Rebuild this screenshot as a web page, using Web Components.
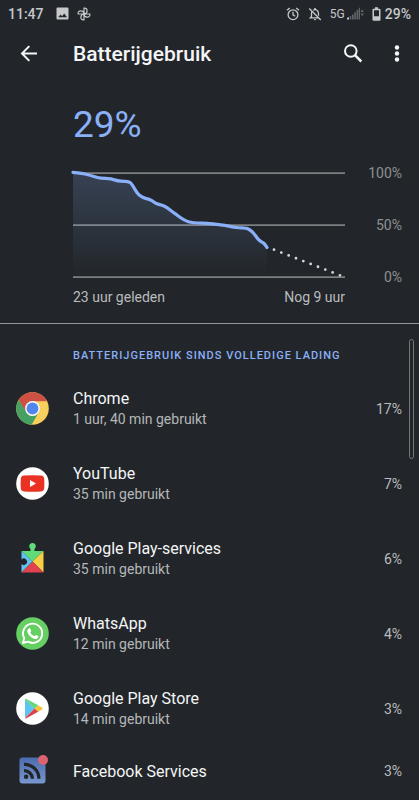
<!DOCTYPE html>
<html lang="nl">
<head>
<meta charset="UTF-8">
<meta name="viewport" content="width=device-width, initial-scale=1.0">
<title>Batterijgebruik</title>
<style>
    :root {
        --bg: #22262a;
        --accent: #8ab0f8;
        --text: #f4f5f6;
        --text-dim: #b4b7b9;
        --line: #7c8082;
    }
    body {
        margin: 0;
        background: var(--bg);
        color: var(--text);
        font-family: Roboto, "Liberation Sans", sans-serif;
    }
</style>
</head>
<body>
<battery-page></battery-page>

<script>
class StatusBar extends HTMLElement {
    constructor() {
        super();
        this.attachShadow({ mode: 'open' });
    }

    connectedCallback() {
        this.shadowRoot.innerHTML = `
            <style>
                :host {
                    display: flex;
                    align-items: center;
                    height: 27px;
                    padding: 0 8px;
                    color: #c6c8ca;
                    font-size: 14px;
                    font-weight: 500;
                }
                svg { display: block; fill: currentColor; }
                .left, .right { display: flex; align-items: center; }
                .left { gap: 8px; }
                .left time { margin-right: 4px; }
                .right { margin-left: auto; gap: 8px; }
                .signal, .battery { display: flex; align-items: center; gap: 2px; }
                .signal span { font-size: 12px; font-weight: 400; }
                .battery { gap: 4px; }
            </style>
            <div class="left">
                <time>${this.getAttribute('time')}</time>
                <svg width="13" height="13" viewBox="0 0 13 13"><path fill-rule="evenodd" d="M1.6 .5h9.8q1.1 0 1.1 1.1v9.8q0 1.1-1.1 1.1H1.6q-1.1 0-1.1-1.1V1.6Q.5.5 1.6.5zM2.2 10.3h8.8L8.2 6.4 6.1 9.2 4.6 7.4z"/></svg>
                <svg width="14" height="14" viewBox="0 0 14 14"><g fill="none" stroke="currentColor" stroke-width="1.2"><path d="M7 7V1.2C9.1.7 10.3 2.2 10.1 3.9 10 5.6 8.7 7 7 7z"/><path d="M7 7h5.8c.5 2.1-1 3.3-2.7 3.1C8.4 10 7 8.7 7 7z"/><path d="M7 7v5.8c-2.1.5-3.3-1-3.1-2.7C4 8.4 5.3 7 7 7z"/><path d="M7 7H1.2C.7 4.9 2.2 3.7 3.9 3.900 5.600 4 7 5.300 7 7z"/></g></svg>
            </div>
            <div class="right">
                <svg width="14" height="14" viewBox="0 0 14 14"><g fill="none" stroke="currentColor" stroke-width="1.3"><circle cx="7" cy="7.7" r="4.9"/><path d="M7 4.7v3.2l2.2 1.3M1 3.3 3.8 1M13 3.3 10.2 1"/></g></svg>
                <svg width="14" height="14" viewBox="0 0 14 14"><g fill="none" stroke="currentColor" stroke-width="1.3"><path d="M3.7 4.8C3.4 6 3.5 8 3.5 9.5L2.3 10.9h8.5M5.2 3.2C8 1.6 10.5 3.7 10.5 6.5v2.2M1.3 1.5l11.5 11.5"/></g><path d="M6.2 1h1.6v2H6.2zM5.6 12h2.8L7 13.6z"/></svg>
                <div class="signal">
                    <span>5G</span>
                    <svg width="17" height="13" viewBox="0 0 17 13"><path d="M0 12.5v-1.5L2 10v2.500z"/><path fill="#63676a" d="M2.7 9.3h1.6v3.2H2.7zM5 7.5h1.6v5H5zM7.3 5.3h1.6v7.2H7.3zM9.6 3h1.6v9.5H9.6zM11.8.7h1.2v11.8h-1.2zM13.6 5 15.2 2.3 16.8 5zM13.6 6.5h3.2L15.2 9.2z"/></svg>
                </div>
                <div class="battery">
                    <svg width="9" height="14" viewBox="0 0 9 14"><path fill-rule="evenodd" d="M3 .3h3v1.5h1.5q1 0 1 1v9.9q0 1-1 1h-6q-1 0-1-1V2.8q0-1 1-1H3zM2 3.2v6h5v-6z"/></svg>
                    <span>29%</span>
                </div>
            </div>
        `;
    }
}

class AppBar extends HTMLElement {
    constructor() {
        super();
        this.attachShadow({ mode: 'open' });
    }

    connectedCallback() {
        this.shadowRoot.innerHTML = `
            <style>
                :host {
                    display: grid;
                    grid-template-columns: 57px 1fr 44px 44px;
                    align-items: center;
                    height: 53px;
                }
                h1 {
                    margin: 0;
                    padding-left: 16px;
                    font-size: 21px;
                    font-weight: 500;
                    line-height: 24px;
                }
                button {
                    display: grid;
                    place-items: center;
                    height: 44px;
                    padding: 0;
                    border: 0;
                    background: none;
                    color: inherit;
                }
                svg { display: block; fill: none; stroke: currentColor; stroke-width: 2; }
                .dots { fill: currentColor; stroke: none; }
            </style>
            <button aria-label="Terug"><svg width="18" height="18" viewBox="0 0 18 18"><path d="M17 8.5H2.5M9.3 1.1 2 8.5l7.3 7.4"/></svg></button>
            <h1><slot></slot></h1>
            <button aria-label="Zoeken"><svg width="20" height="20" viewBox="0 0 20 20"><circle cx="7.8" cy="7" r="5.8"/><path stroke-width="2.5" d="m12 11.2 6.300 6.300"/></svg></button>
            <button aria-label="Meer opties"><svg class="dots" width="6" height="18" viewBox="0 0 6 18"><circle cx="3" cy="2.500" r="2.200"/><circle cx="3" cy="8.500" r="2.200"/><circle cx="3" cy="14.500" r="2.200"/></svg></button>
        `;
    }
}

class BatteryChart extends HTMLElement {
    constructor() {
        super();
        this.attachShadow({ mode: 'open' });
    }

    connectedCallback() {
        const line = 'M0 7.4C6 8 10 8.5 15 9.7S23 12.8 28 13.2S34 13 38 13.9S43 15.8 48 16.2S54 16 56.5 17.2C60 19 62 26.5 66.5 30.2S73 33 77 34.7S80 37 84 38.7S88 39.3 92 41.5S98 46 102 48.7S110 55 115.5 56.8S128 58 134 58.3S144 59.3 150 60.2S158 61.7 163.5 62.5S169 62.5 172.5 63.2C180 64.5 182 71 185.5 74.5C188 77 189.5 77 191 78.5C192.5 80 193 81 194 82.5';
        this.shadowRoot.innerHTML = `
            <style>
                :host {
                    display: block;
                    padding: 23px 17px 16px 73px;
                }
                .level {
                    color: var(--accent);
                    font-size: 37px;
                    line-height: 44px;
                }
                .plot {
                    display: grid;
                    grid-template-columns: 1fr 57px;
                    margin-top: 18px;
                }
                svg { display: block; width: 100%; height: 120px; overflow: visible; }
                svg path { fill: none; vector-effect: non-scaling-stroke; }
                .grid { stroke: var(--line); stroke-width: 1.7; }
                .used { stroke: var(--accent); stroke-width: 3.2; stroke-linecap: round; stroke-linejoin: round; }
                .left { stroke: #d4d6d8; stroke-width: 2.8; stroke-linecap: round; stroke-dasharray: 0 7.86; }
                svg .area { fill: url(#fade); }
                .scale {
                    display: flex;
                    flex-direction: column;
                    justify-content: space-between;
                    text-align: right;
                    color: #8d9092;
                    font-size: 14px;
                    line-height: 16px;
                }
                .span {
                    grid-column: 1;
                    display: flex;
                    justify-content: space-between;
                    margin-top: 3px;
                    color: #b9bcbe;
                    font-size: 14px;
                    line-height: 19px;
                }
            </style>
            <div class="level">29%</div>
            <div class="plot">
                <svg viewBox="0 0 272 120" preserveAspectRatio="none">
                    <linearGradient id="fade" x1="0" y1="0" x2="0" y2="1">
                        <stop offset="0" stop-color="#8ab0f8" stop-opacity=".2"/>
                        <stop offset="1" stop-color="#8ab0f8" stop-opacity="0"/>
                    </linearGradient>
                    <path class="grid" d="M0 8.2H272M0 60.2H272M0 112.2H272"/>
                    <path class="area" d="${line}V112H0z"/>
                    <path class="used" d="${line}"/>
                    <path class="left" d="M201 84.7 267.5 110.5"/>
                </svg>
                <div class="scale"><span>100%</span><span>50%</span><span>0%</span></div>
                <div class="span"><span>23 uur geleden</span><span>Nog 9 uur</span></div>
            </div>
        `;
    }
}

class UsageRow extends HTMLElement {
    constructor() {
        super();
        this.attachShadow({ mode: 'open' });
    }

    connectedCallback() {
        const detail = this.getAttribute('detail');
        this.shadowRoot.innerHTML = `
            <style>
                :host {
                    display: grid;
                    grid-template-columns: 33px 1fr auto;
                    column-gap: 24px;
                    align-items: center;
                    height: 75px;
                    padding: 0 17px 0 16px;
                }
                :host(.single) { height: 50px; }
                ::slotted(svg) { display: block; }
                .name { font-size: 16px; line-height: 21px; }
                .detail { color: var(--text-dim); font-size: 14px; line-height: 20px; }
                .share { color: #b9bcbe; font-size: 14px; }
            </style>
            <slot name="icon"></slot>
            <div>
                <div class="name"><slot></slot></div>
                ${detail ? `<div class="detail">${detail}</div>` : ''}
            </div>
            <div class="share">${this.getAttribute('share')}</div>
        `;
    }
}

class BatteryPage extends HTMLElement {
    constructor() {
        super();
        this.attachShadow({ mode: 'open' });
    }

    connectedCallback() {
        this.shadowRoot.innerHTML = `
            <style>
                :host {
                    display: flex;
                    flex-direction: column;
                    height: 100vh;
                    overflow: hidden;
                }
                .list {
                    position: relative;
                    flex: 1;
                    min-height: 0;
                    overflow: hidden;
                    border-top: 1px solid #92979a;
                }
                h2 {
                    margin: 0;
                    padding: 24px 16px 7px 73px;
                    color: var(--accent);
                    font-size: 11px;
                    font-weight: 500;
                    line-height: 16px;
                    letter-spacing: 1px;
                    text-transform: uppercase;
                }
                /* scroll thumb, floats over the rows */
                .thumb {
                    position: absolute;
                    top: 15px;
                    right: 5px;
                    width: 3px;
                    height: 118px;
                    border: 1px solid #74787a;
                    border-radius: 3px;
                }
            </style>
            <status-bar time="11:47"></status-bar>
            <app-bar>Batterijgebruik</app-bar>
            <battery-chart></battery-chart>
            <section class="list">
                <h2>Batterijgebruik sinds volledige lading</h2>
                <usage-row detail="1 uur, 40 min gebruikt" share="17%">
                    <svg slot="icon" width="33" height="33" viewBox="0 0 33 33">
                        <circle cx="16.5" cy="16.5" r="16.3" fill="#f6cf5c"/>
                        <path fill="#cc5144" d="M2.6 8A16.3 16.3 0 0 1 31 9.2H16.5L9.7 20.5z"/>
                        <path fill="#45a063" d="M2.6 8 10.2 20.3a7.3 7.3 0 0 0 12.6 0L15.6 32.8A16.3 16.3 0 0 1 2.6 8z"/>
                        <circle cx="16.5" cy="16.5" r="7.4" fill="#fafafa"/>
                        <circle cx="16.5" cy="16.5" r="5.9" fill="#5186ec"/>
                    </svg>
                    Chrome
                </usage-row>
                <usage-row detail="35 min gebruikt" share="7%">
                    <svg slot="icon" width="33" height="33" viewBox="0 0 33 33">
                        <circle cx="16.5" cy="16.5" r="16.3" fill="#fff"/>
                        <path fill="#e93223" d="M8 8.6Q16.5 8 25 8.6 28 8.8 28.2 12 28.6 16.5 28.2 21 28 24.2 25 24.4 16.5 25 8 24.4 5 24.2 4.8 21 4.4 16.5 4.8 12 5 8.8 8 8.6z"/>
                        <path fill="#fff" d="m14 13 6 3.5-6 3.5z"/>
                    </svg>
                    YouTube
                </usage-row>
                <usage-row detail="35 min gebruikt" share="6%">
                    <svg slot="icon" width="33" height="33" viewBox="0 0 33 33">
                        <path fill="#5fdb78" d="M5.5 9h9V6.9a3.300 3.300 0 1 1 4 0V9h9L16.5 19.500z"/>
                        <path fill="#5fc3f2" d="M5.500 9 16.500 19.500 5.500 30.500V22a3.200 3.200 0 1 0 0-4.500z"/>
                        <path fill="#f7ce46" d="M27.500 9v21.500l-11-11z"/>
                        <path fill="#e0434c" d="m5.500 30.500 11-11 11 11z"/>
                    </svg>
                    Google Play-services
                </usage-row>
                <usage-row detail="12 min gebruikt" share="4%">
                    <svg slot="icon" width="33" height="33" viewBox="0 0 33 33">
                        <circle cx="16.5" cy="16.5" r="16.3" fill="#65cf63"/>
                        <path fill="none" stroke="#fff" stroke-width="1.9" stroke-linejoin="round" d="m6.9 26 1.4-4.9a9.6 9.6 0 1 1 3.7 3.6z"/>
                        <path fill="#fff" d="M13 11.3c.6-.3 1.2-.1 1.4.5l.8 2c.2.5-.7 1.300-.9 1.700.9 1.800 2.300 3 4.100 3.700.5-.4 1-1.400 1.600-1.300l2.200 1.100c.5.300.1 1.600-.4 2.100-1.600 1.500-3.700.8-5.400-.1-2.200-1.100-4.200-3.400-4.900-5.500-.5-1.600.1-3.500 1.500-4.200z"/>
                    </svg>
                    WhatsApp
                </usage-row>
                <usage-row detail="14 min gebruikt" share="3%">
                    <svg slot="icon" width="33" height="33" viewBox="0 0 33 33">
                        <circle cx="16.5" cy="16.5" r="16.3" fill="#fff"/>
                        <path fill="#5bc4f0" d="M9 7.6 18.6 16.5 9 26z"/>
                        <path fill="#63d77c" d="M9 7.1q.5-.6 1.4-.1L22.3 13.3 18.6 16.7 9 7.6z"/>
                        <path fill="#f5c644" d="m22 13.2 4.2 2.4q1.2.9 0 1.8L22 19.9 18.5 16.5z"/>
                        <path fill="#d9434e" d="M9 26 18.6 16.5 22.2 19.8 10.4 26.3q-.9.4-1.4-.3z"/>
                    </svg>
                    Google Play Store
                </usage-row>
                <usage-row class="single" share="3%">
                    <svg slot="icon" width="33" height="33" viewBox="0 0 33 33">
                        <linearGradient id="fb" x1="0" y1="0" x2="0" y2="1"><stop offset="0" stop-color="#4d6cad"/><stop offset="1" stop-color="#7896cf"/></linearGradient>
                        <rect x="3.5" y="2.5" width="26" height="26" rx="3" fill="url(#fb)"/>
                        <path fill="none" stroke="#22262a" stroke-width="3.2" d="M8 9.3A14.500 14.500 0 0 1 22.900 23.800M8 15.700A8.300 8.300 0 0 1 16.500 23.800"/>
                        <circle cx="10.100" cy="21.800" r="2.200" fill="#22262a"/>
                        <circle cx="27" cy="5" r="5" fill="#dc6470"/>
                    </svg>
                    Facebook Services
                </usage-row>
                <div class="thumb"></div>
            </section>
        `;
    }
}

customElements.define('status-bar', StatusBar);
customElements.define('app-bar', AppBar);
customElements.define('battery-chart', BatteryChart);
customElements.define('usage-row', UsageRow);
customElements.define('battery-page', BatteryPage);
</script>
</body>
</html>
